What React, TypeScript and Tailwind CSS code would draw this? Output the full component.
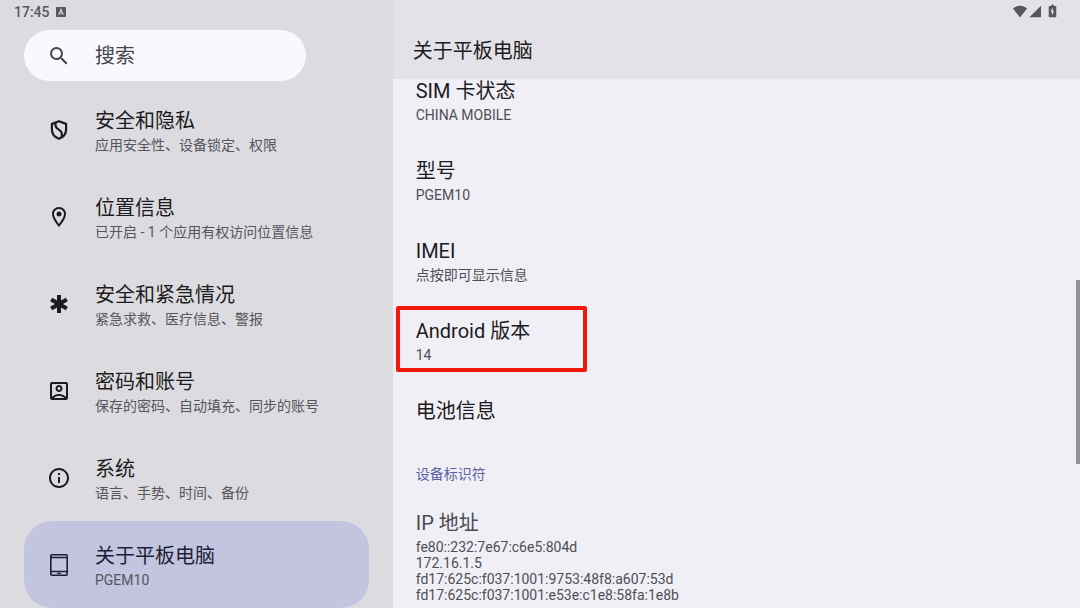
import type { ReactNode } from "react";
import { clsx } from "clsx";
import {
  MdEmergency,
  MdInfoOutline,
  MdOutlineAccountBox,
  MdOutlineLocationOn,
  MdSearch,
} from "react-icons/md";

type MenuItem = {
  title: string;
  summary: string;
  icon: ReactNode;
  active?: boolean;
};

type InfoItem = {
  title: string;
  summary?: string[];
  highlighted?: boolean;
  muted?: boolean;
};

function ShieldIcon() {
  return (
    <svg viewBox="0 0 24 24" className="size-6" fill="none" stroke="currentColor" strokeWidth="2.2">
      <path d="M12 3.2 4.900 5.900v5.600c0 4.300 3 7.800 7.100 9.300 4.100-1.500 7.100-5 7.100-9.300V5.900z" strokeLinejoin="round" />
      <path d="M8.600 4.600c-.8 3.500.2 5.400 3.200 7 3 1.700 4 3.700 2.600 7.400" />
    </svg>
  );
}

function TabletIcon() {
  return (
    <svg viewBox="0 0 24 24" className="size-6" fill="none" stroke="currentColor">
      <rect x="3.8" y="1.8" width="16.4" height="20.4" rx="1" strokeWidth="1.6" />
      <path d="M4 4.500h16M4 18.500h16" strokeWidth="1.3" />
      <path d="M10 20.300h4" strokeWidth="1.2" />
    </svg>
  );
}

function InputMethodIcon() {
  return (
    <svg viewBox="0 0 10 10" className="size-2.5">
      <rect width="10" height="10" rx="1" fill="#58585c" />
      <path d="M2.700 7.800 5 2.500l2.300 5.300M3.600 6.200h2.800" fill="none" stroke="#dcdbe0" strokeWidth="1.1" />
    </svg>
  );
}

function StatusIcons() {
  return (
    <svg viewBox="0 0 46 14" className="h-3.5 w-[46px]" fill="#58585c" role="img" aria-label="status">
      <path d="M8 13.400.900 4.600C2.700 2.800 5.200 1.700 8 1.700s5.300 1.100 7.100 2.900z" />
      <path d="M29 1.800v11.400H17.300z" />
      <path
        fillRule="evenodd"
        d="M37.500 2h1.700V.800h2.800V2h1.500c.5 0 .8.300.8.800v9.600c0 .5-.3.800-.8.800h-6c-.5 0-.8-.3-.8-.8V2.800c0-.5.3-.8.800-.8zm3.100 1.800L38.700 7l1.100 1v3l2.200-3.300-1-.7z"
      />
    </svg>
  );
}

const menuItems: MenuItem[] = [
  { title: "安全和隐私", summary: "应用安全性、设备锁定、权限", icon: <ShieldIcon /> },
  {
    title: "位置信息",
    summary: "已开启 - 1 个应用有权访问位置信息",
    icon: <MdOutlineLocationOn className="size-6" />,
  },
  {
    title: "安全和紧急情况",
    summary: "紧急求救、医疗信息、警报",
    icon: <MdEmergency className="size-6" />,
  },
  {
    title: "密码和账号",
    summary: "保存的密码、自动填充、同步的账号",
    icon: <MdOutlineAccountBox className="size-6" />,
  },
  {
    title: "系统",
    summary: "语言、手势、时间、备份",
    icon: <MdInfoOutline className="size-6" />,
  },
  { title: "关于平板电脑", summary: "PGEM10", icon: <TabletIcon />, active: true },
];

const deviceInfo: InfoItem[] = [
  { title: "SIM 卡状态", summary: ["CHINA MOBILE"] },
  { title: "型号", summary: ["PGEM10"] },
  { title: "IMEI", summary: ["点按即可显示信息"] },
  { title: "Android 版本", summary: ["14"], highlighted: true },
  { title: "电池信息" },
];

const deviceIdentifiers: InfoItem[] = [
  {
    title: "IP 地址",
    summary: [
      "fe80::232:7e67:c6e5:804d",
      "172.16.1.5",
      "fd17:625c:f037:1001:9753:48f8:a607:53d",
      "fd17:625c:f037:1001:e53e:c1e8:58fa:1e8b",
    ],
    muted: true,
  },
];

function MenuLink({ item }: { item: MenuItem }) {
  return (
    <a
      href="#"
      aria-current={item.active ? "page" : undefined}
      className={clsx(
        "flex h-[87px] items-center gap-6 rounded-[28px] pl-[23px]",
        item.active ? "bg-[#c3c4df] text-[#1d1e33]" : "text-[#1c1b20]"
      )}
    >
      {item.icon}
      <span className="flex flex-col gap-0.5">
        <span className="text-xl leading-7">{item.title}</span>
        <span className="text-sm leading-4 text-[#55555b]">{item.summary}</span>
      </span>
    </a>
  );
}

function InfoRow({ item }: { item: InfoItem }) {
  return (
    <li className="relative py-[17px] pl-[23px]">
      <h2 className={clsx("text-xl leading-7", item.muted ? "text-[#4a4a50]" : "text-[#1c1b20]")}>
        {item.title}
      </h2>
      {item.summary && (
        <div className="mt-0.5 text-sm leading-4 text-[#4e4e54]">
          {item.summary.map((line) => (
            <p key={line}>{line}</p>
          ))}
        </div>
      )}
      {item.highlighted && (
        <span className="absolute top-1.5 bottom-2 left-[3px] w-[191px] rounded-xs border-4 border-[#f3180c]" />
      )}
    </li>
  );
}

export default function App() {
  return (
    <div
      lang="zh-CN"
      className="grid h-screen grid-cols-[4fr_7fr] overflow-hidden bg-[#dcdbe0] font-['Roboto','Noto_Sans_CJK_SC',sans-serif]"
    >
      <aside className="min-w-0 px-6">
        <div className="-ml-2.5 flex h-[30px] items-start gap-1.5 pt-1 text-sm leading-4 font-medium text-[#58585c]">
          <time>17:45</time>
          <span className="pt-[3px]">
            <InputMethodIcon />
          </span>
        </div>
        <label className="mr-[63px] flex h-[51px] items-center gap-6 rounded-full bg-[#faf8ff] pl-[23px] text-[#45454b]">
          <MdSearch className="size-6 shrink-0" />
          <input
            type="search"
            aria-label="搜索"
            placeholder="搜索"
            className="w-full min-w-0 bg-transparent pr-6 text-xl leading-7 outline-none placeholder:text-[#45454b]"
          />
        </label>
        <nav className="mt-[5px]">
          {menuItems.map((item) => (
            <MenuLink key={item.title} item={item} />
          ))}
        </nav>
      </aside>

      <main className="relative flex min-h-0 min-w-0 flex-col bg-[#f0eff6]">
        <header className="relative z-10 h-[79px] shrink-0 bg-[#e3e2e8] pl-5">
          <div className="flex h-[37px] justify-end pt-1 pr-[22px]">
            <StatusIcons />
          </div>
          <h1 className="text-xl leading-7 text-[#1c1b20]">关于平板电脑</h1>
        </header>
        <div className="-mt-[19px] min-h-0 flex-1 overflow-hidden">
          <ul>
            {deviceInfo.map((item) => (
              <InfoRow key={item.title} item={item} />
            ))}
          </ul>
          <h3 className="pt-[22px] pb-2 pl-[23px] text-sm leading-5 text-[#5a60a2]">设备标识符</h3>
          <ul>
            {deviceIdentifiers.map((item) => (
              <InfoRow key={item.title} item={item} />
            ))}
          </ul>
        </div>
        <div className="absolute top-[46%] right-0 h-[184px] w-1 bg-[#929298]" />
      </main>
    </div>
  );
}
